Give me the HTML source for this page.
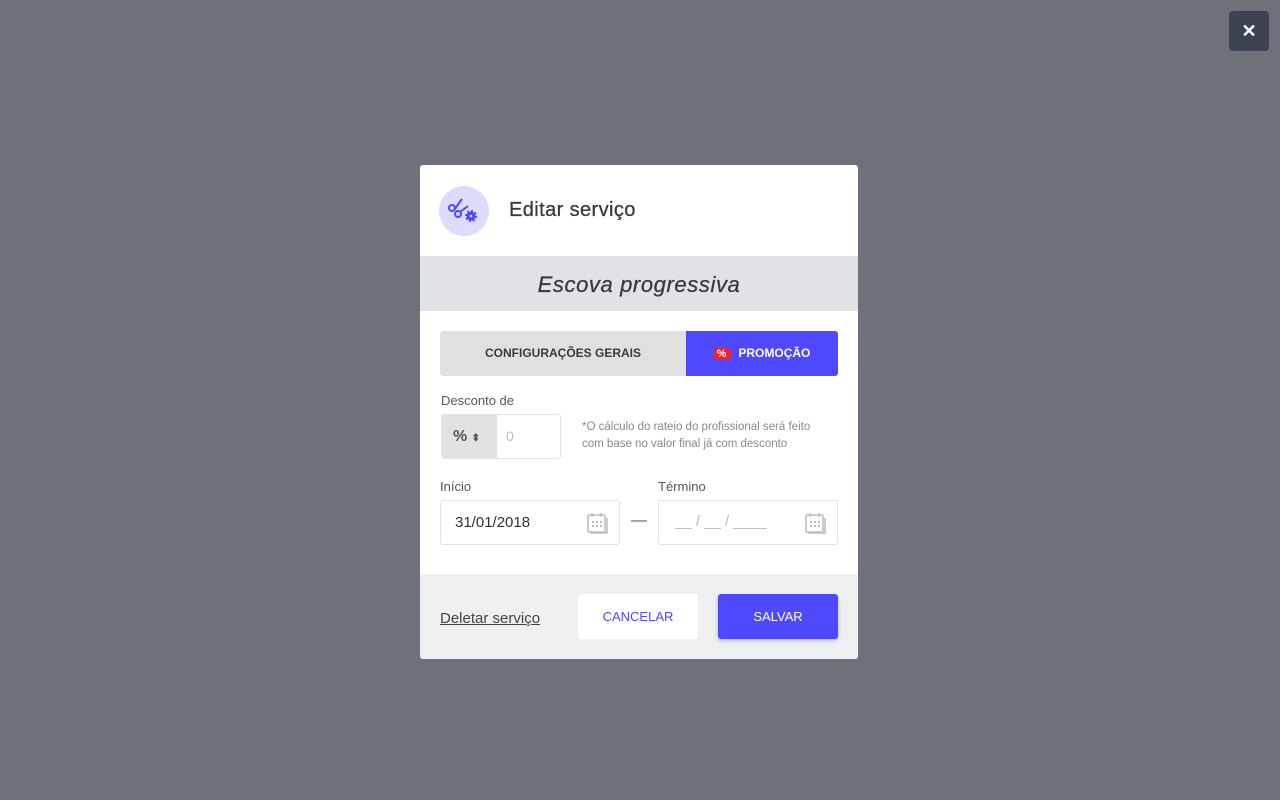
<!DOCTYPE html>
<html><head><meta charset="utf-8"><style>
*{box-sizing:border-box;margin:0;padding:0}
body{width:1280px;height:800px;background:#6e717a;font-family:"Liberation Sans",sans-serif;position:relative;overflow:hidden;color:#3a3a3a}
.x{position:absolute;left:1229px;top:11px;width:40px;height:40px;background:#3d4350;border-radius:4px;color:#fff;font-size:18px;font-weight:bold;text-align:center;line-height:40px}
.m{position:absolute;left:420px;top:165px;width:438px;height:494px;background:#fff;border-radius:3px;overflow:hidden}
.ic{position:absolute;left:19px;top:21px;width:50px;height:50px;border-radius:50%;background:#dcdcfd}
.t{position:absolute;left:89px;top:34px;font-size:20px;color:#3a3a3a;letter-spacing:0.4px;-webkit-text-stroke:0.3px #3a3a3a}
.band{position:absolute;left:0;top:91px;width:438px;height:55px;background:#e1e2e6;text-align:center;font-size:22px;font-style:italic;line-height:57px;color:#3a3a3a;letter-spacing:0.6px;-webkit-text-stroke:0.3px #3a3a3a}
.tabs{position:absolute;left:20px;top:166px;width:398px;height:45px;border-radius:3px;overflow:hidden;display:flex;font-size:12px;font-weight:bold}
.tabs div{line-height:45px;text-align:center}
.lbl{position:absolute;font-size:13px;color:#555}
.inp{position:absolute;border:1px solid #e3e3e6;border-radius:3px;background:#fff}
.foot{position:absolute;left:0;top:409px;width:438px;height:85px;background:#eeeff1}
.btn{position:absolute;top:20px;width:120px;height:45px;border-radius:3px;text-align:center;line-height:45px;font-size:13px}
.cal{position:absolute;right:11px;top:11px}
</style></head><body>
<div class="x">✕</div>
<div class="m">
 <div class="ic"><svg width="50" height="50" viewBox="0 0 50 50" fill="none" stroke="#4e49ff" stroke-width="2"><circle cx="13" cy="22" r="3"/><circle cx="19" cy="28" r="3"/><path d="M15 24 L23 13 M21 26 L29 20"/><circle cx="32" cy="30" r="4.5" fill="#4e49ff" stroke-dasharray="2 1.5" stroke-width="3"/><circle cx="32" cy="30" r="1.3" fill="#dcdcfd" stroke="none"/></svg></div>
 <div class="t">Editar serviço</div>
 <div class="band">Escova progressiva</div>
 <div class="tabs"><div style="width:246px;background:#e0e0e0;color:#3a3a3a">CONFIGURAÇÕES GERAIS</div><div style="width:152px;background:#4e49ff;color:#fff"><span style="background:#e8222e;color:#fff;padding:0 6px 0 3px;font-size:11px;margin-right:6px;border-radius:2px;clip-path:polygon(0 0,80% 0,100% 50%,80% 100%,0 100%)">%</span>PROMOÇÃO</div></div>
 <div class="lbl" style="left:21px;top:228px">Desconto de</div>
 <div class="inp" style="left:21px;top:249px;width:120px;height:45px;overflow:hidden"><div style="position:absolute;left:0;top:0;width:55px;height:45px;background:#e2e2e2;font-size:16px;font-weight:bold;color:#555;line-height:44px;padding-left:11px">% <span style="font-size:10px">⬍</span></div><div style="position:absolute;left:64px;top:13px;color:#bbb;font-size:14px">0</div></div>
 <div style="position:absolute;left:162px;top:254px;font-size:11.5px;line-height:17px;color:#888">*O cálculo do rateio do profissional será feito<br>com base no valor final já com desconto</div>
 <div class="lbl" style="left:20px;top:314px">Início</div>
 <div class="lbl" style="left:238px;top:314px">Término</div>
 <div class="inp" style="left:20px;top:335px;width:180px;height:45px"><span style="position:absolute;left:14px;top:13px;font-size:15px;color:#333">31/01/2018</span><svg class="cal" width="22" height="22" viewBox="0 0 22 22" fill="none" stroke="#bbb" stroke-width="1.5"><rect x="2" y="3" width="17" height="17" rx="1"/><path d="M6 1v4M15 1v4M4 21h17V6" /><g fill="#bbb" stroke="none"><rect x="6" y="9" width="2" height="2"/><rect x="10" y="9" width="2" height="2"/><rect x="14" y="9" width="2" height="2"/><rect x="6" y="13" width="2" height="2"/><rect x="10" y="13" width="2" height="2"/><rect x="14" y="13" width="2" height="2"/></g></svg></div>
 <div style="position:absolute;left:211px;top:347px;color:#555">—</div>
 <div class="inp" style="left:238px;top:335px;width:180px;height:45px"><span style="position:absolute;left:16px;top:12px;font-size:15px;color:#bbb">__ / __ / ____</span><svg class="cal" width="22" height="22" viewBox="0 0 22 22" fill="none" stroke="#bbb" stroke-width="1.5"><rect x="2" y="3" width="17" height="17" rx="1"/><path d="M6 1v4M15 1v4M4 21h17V6" /><g fill="#bbb" stroke="none"><rect x="6" y="9" width="2" height="2"/><rect x="10" y="9" width="2" height="2"/><rect x="14" y="9" width="2" height="2"/><rect x="6" y="13" width="2" height="2"/><rect x="10" y="13" width="2" height="2"/><rect x="14" y="13" width="2" height="2"/></g></svg></div>
 <div class="foot">
  <div style="position:absolute;left:20px;top:36px;font-size:15px;color:#444;text-decoration:underline">Deletar serviço</div>
  <div class="btn" style="left:158px;background:#fff;color:#4e49ff">CANCELAR</div>
  <div class="btn" style="left:298px;background:#4e49ff;color:#fff;box-shadow:0 2px 4px rgba(0,0,0,.2)">SALVAR</div>
 </div>
</div>
</body></html>
